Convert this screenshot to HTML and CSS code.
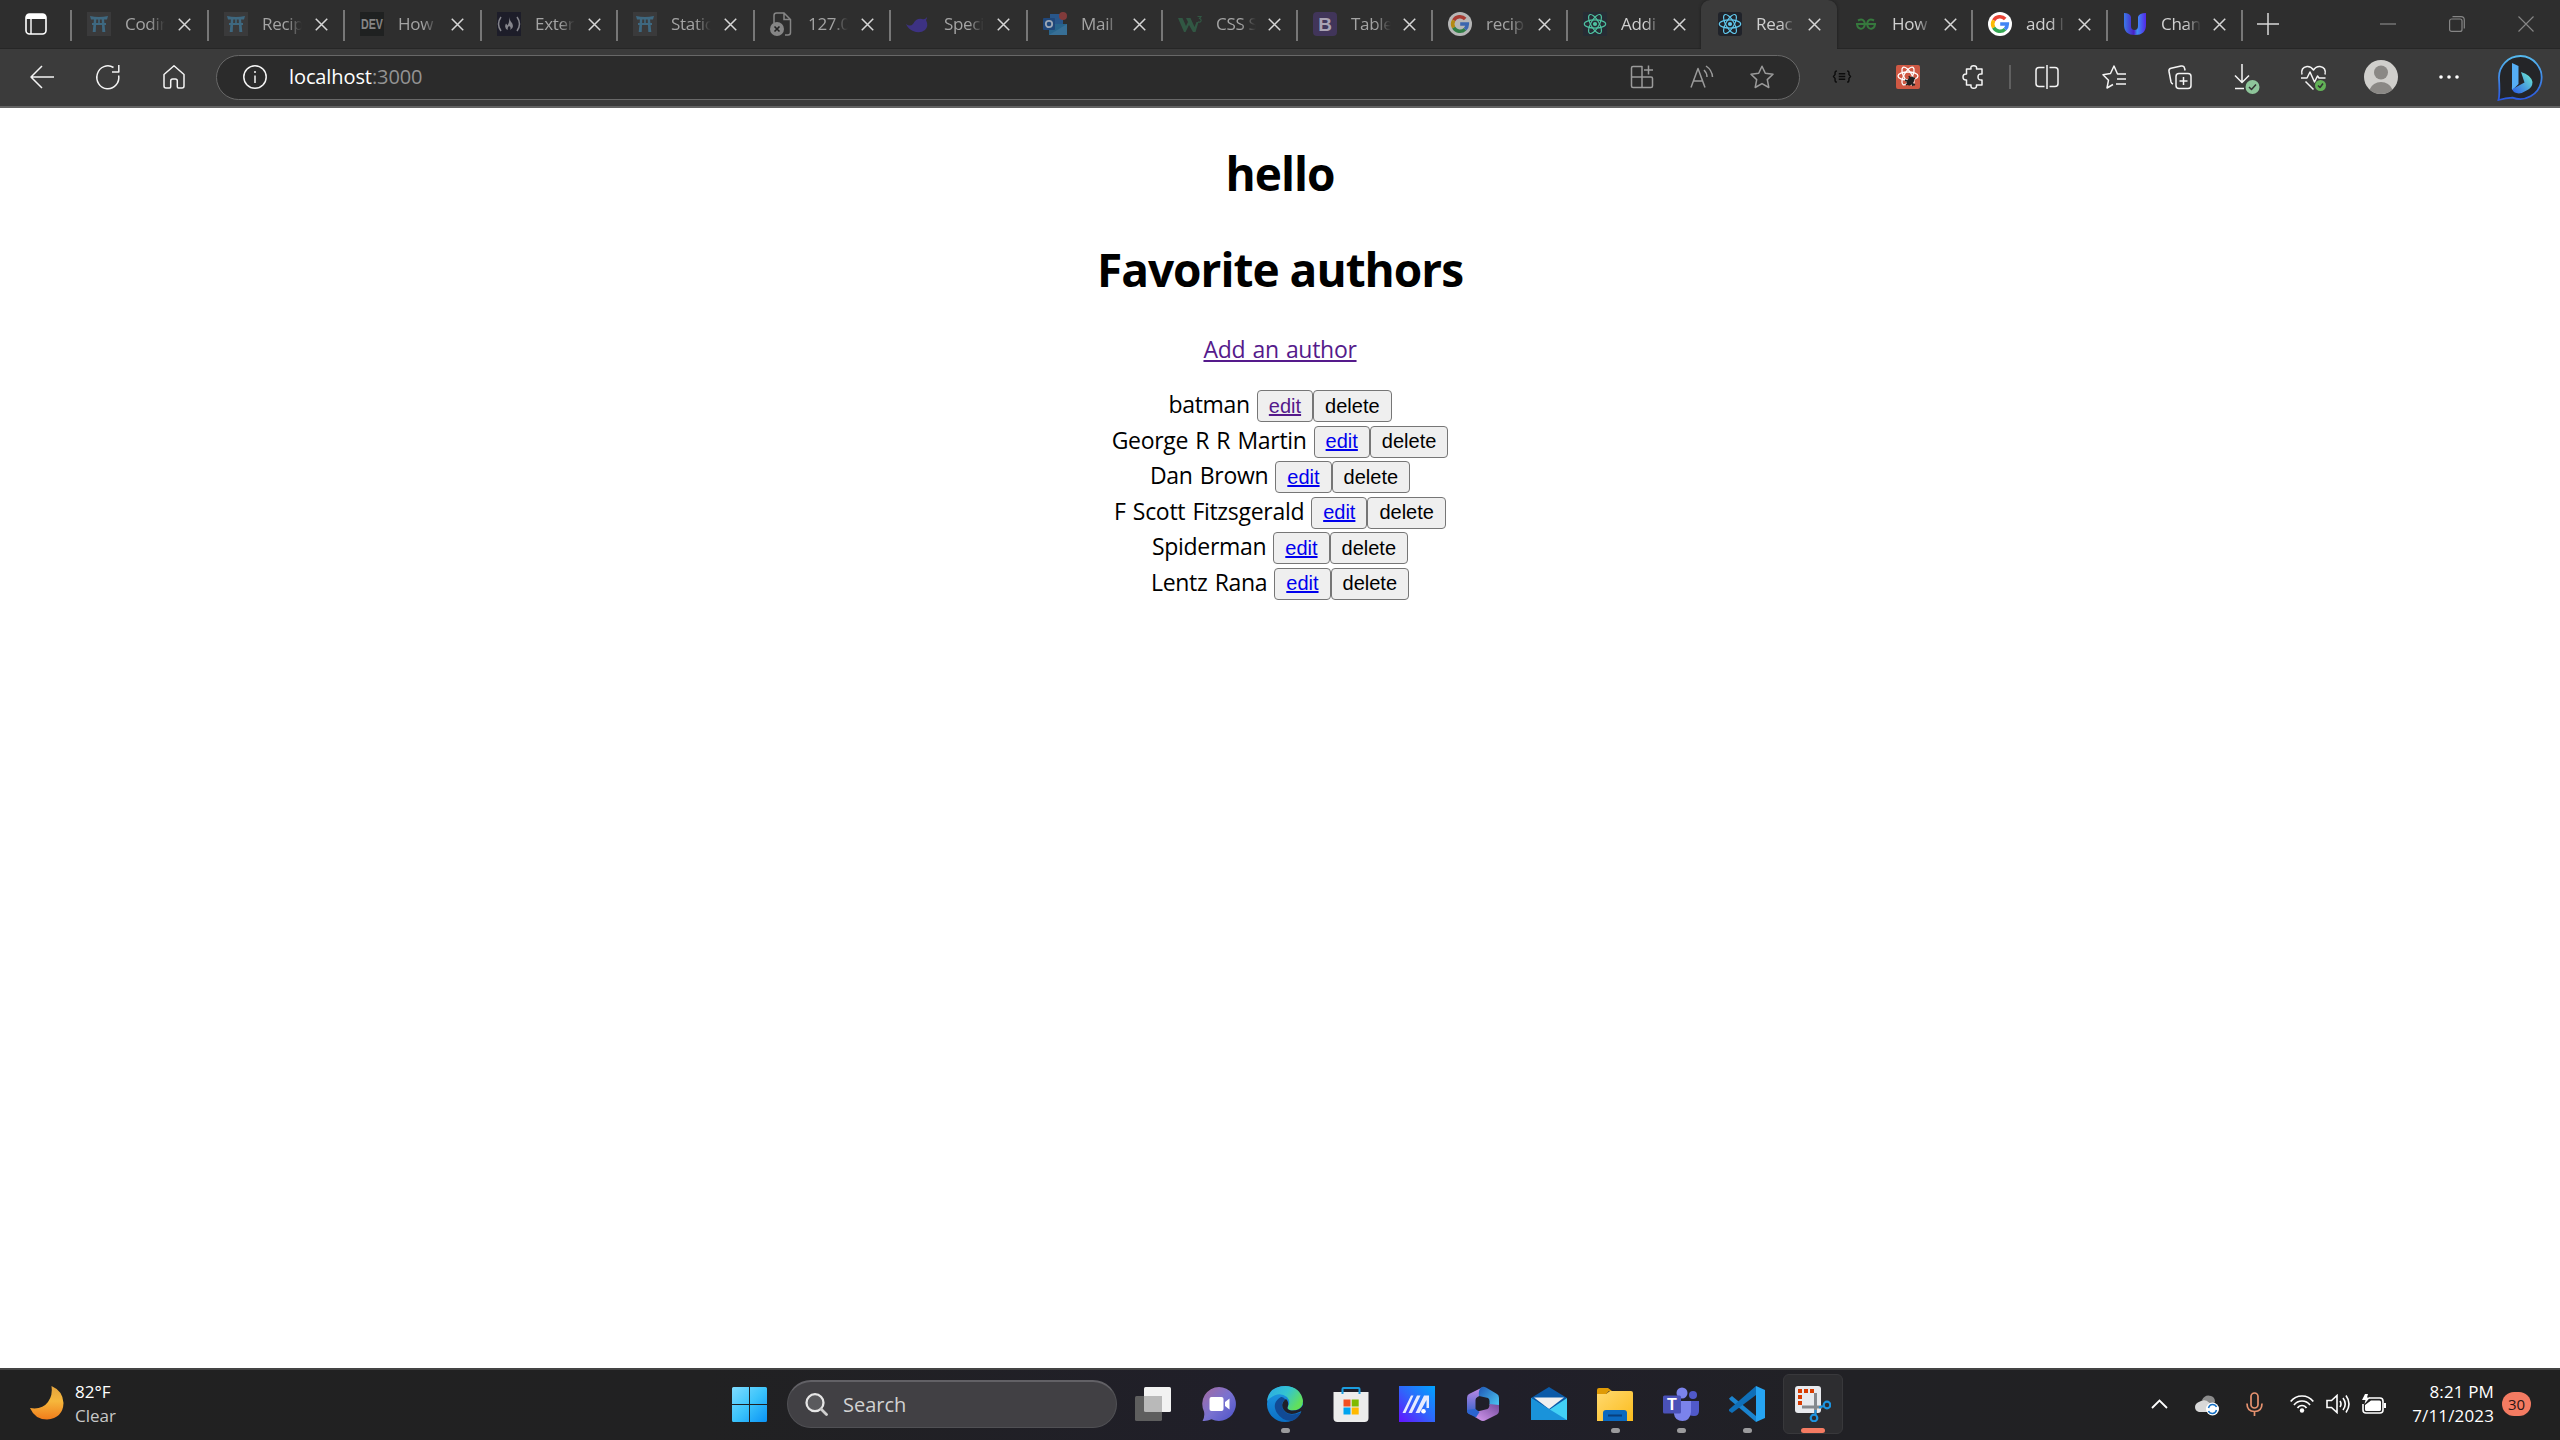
FILE: index.html
```html
<!DOCTYPE html>
<html lang="en">
<head>
<meta charset="utf-8">
<title>React App</title>
<link rel="stylesheet" href="styles.css">
</head>
<body>
<svg class="defs" width="0" height="0">
  <defs>
    <linearGradient id="gWin" x1="0" y1="0" x2="1" y2="1"><stop offset="0" stop-color="#7fdcff"/><stop offset=".5" stop-color="#3cc4fb"/><stop offset="1" stop-color="#0a93f5"/></linearGradient>
    <linearGradient id="gMoon" x1="0" y1="0" x2="0" y2="1"><stop offset="0" stop-color="#e3a33d"/><stop offset=".45" stop-color="#f6b73c"/><stop offset="1" stop-color="#f07c1b"/></linearGradient>
    <linearGradient id="gChat" x1="0" y1="0" x2="1" y2="1"><stop offset="0" stop-color="#a56a9e"/><stop offset=".5" stop-color="#7a72d0"/><stop offset="1" stop-color="#4b52c9"/></linearGradient>
    <linearGradient id="gEdge" x1="0" y1="0" x2="1" y2=".5"><stop offset="0" stop-color="#2aa7e8"/><stop offset=".55" stop-color="#34c4d0"/><stop offset="1" stop-color="#62e05a"/></linearGradient>
    <linearGradient id="gEdge2" x1="0" y1="0" x2="0" y2="1"><stop offset="0" stop-color="#1f9be6"/><stop offset="1" stop-color="#0b6fc4"/></linearGradient>
    <linearGradient id="gM" x1="1" y1="0" x2="0" y2="1"><stop offset="0" stop-color="#00a4ff"/><stop offset=".5" stop-color="#2f66fb"/><stop offset="1" stop-color="#6512ff"/></linearGradient>
    <linearGradient id="gFold" x1="0" y1="0" x2="1" y2="1"><stop offset="0" stop-color="#ffd970"/><stop offset="1" stop-color="#fbbc1c"/></linearGradient>
    <linearGradient id="g365a" x1="0" y1="0" x2="0" y2="1"><stop offset="0" stop-color="#c58be6"/><stop offset="1" stop-color="#2a5fc8"/></linearGradient>
    <linearGradient id="g365b" x1="0" y1="0" x2="1" y2="1"><stop offset="0" stop-color="#1f57b5"/><stop offset="1" stop-color="#51d4fb"/></linearGradient>
    <linearGradient id="g365c" x1="0" y1="1" x2="1" y2="0"><stop offset="0" stop-color="#d59af0"/><stop offset="1" stop-color="#744a9c"/></linearGradient>
    <linearGradient id="gBing" x1="0" y1="0" x2="0" y2="1"><stop offset="0" stop-color="#55b9ee"/><stop offset="1" stop-color="#2a56dd"/></linearGradient>
    <linearGradient id="gBing2" x1="0" y1="1" x2="1" y2="0"><stop offset="0" stop-color="#2a5ce6"/><stop offset="1" stop-color="#6ff0d0"/></linearGradient>
    <linearGradient id="gU" x1="0" y1="0" x2="1" y2="0"><stop offset="0" stop-color="#3b78e8"/><stop offset=".45" stop-color="#4a1fc4"/><stop offset=".6" stop-color="#3f8ff5"/><stop offset="1" stop-color="#5326e8"/></linearGradient>
    <symbol id="x" viewBox="0 0 12 12"><path d="M.7.7l10.6 10.6M11.3.7L.7 11.3" fill="none" stroke="currentColor" stroke-width="1.4"/></symbol>
    <symbol id="torii" viewBox="0 0 24 24"><rect width="24" height="24" fill="#3a3a3b"/><path d="M3 4q9 2 18 0l-1 3.500H4zM5 11h14v2H5zM7 7h2.300l-.6 13H5.700zM14.700 7H17l1.300 13h-3zM11.200 7h1.600v4h-1.600z" fill="#3e6880"/></symbol>
    <symbol id="react" viewBox="0 0 24 24"><g fill="none" stroke="currentColor" stroke-width="1.15"><ellipse cx="12" cy="12" rx="10.7" ry="4.1"/><ellipse cx="12" cy="12" rx="10.7" ry="4.1" transform="rotate(60 12 12)"/><ellipse cx="12" cy="12" rx="10.7" ry="4.1" transform="rotate(120 12 12)"/></g><circle cx="12" cy="12" r="2.1" fill="currentColor"/></symbol>
    <symbol id="google" viewBox="0 0 24 24"><circle cx="12" cy="12" r="12" fill="#fff"/><g fill="none" stroke-width="3.6"><path d="M5.7 8.3A7.3 7.3 0 0 1 17.2 6.9" stroke="#ea4335"/><path d="M5.7 15.7a7.3 7.3 0 0 1 0-7.4" stroke="#fbbc05"/><path d="M17 17.3A7.3 7.3 0 0 1 5.7 15.7" stroke="#34a853"/><path d="M12.2 12h7.1a7.3 7.3 0 0 1-2.3 5.3" stroke="#4285f4"/></g></symbol>
  </defs>
</svg>

<header class="browser">
  <div class="tabstrip">
    <div class="workspaces"><svg width="22" height="22" viewBox="0 0 22 22"><rect x="1" y="1" width="20" height="20" rx="3.500" fill="none" stroke="#fff" stroke-width="1.6"/><path d="M1 6V4q0-3 3-3h14q3 0 3 3v2z" fill="#fff"/><path d="M6 6v15" stroke="#fff" stroke-width="1.4"/></svg></div>
    <div class="tab w137"><svg class="fav"><use href="#torii"/></svg><span class="title">Codin</span><svg class="close"><use href="#x"/></svg></div>
    <div class="tab"><svg class="fav"><use href="#torii"/></svg><span class="title">Recip</span><svg class="close"><use href="#x"/></svg></div>
    <div class="tab w137"><svg class="fav" viewBox="0 0 24 24"><rect width="24" height="24" fill="#1f2121"/><text class="dev" x="12" y="17" textLength="22" lengthAdjust="spacingAndGlyphs">DEV</text></svg><span class="title">How</span><svg class="close"><use href="#x"/></svg></div>
    <div class="tab"><svg class="fav" viewBox="0 0 24 24"><rect width="24" height="24" fill="#1d1d29"/><path d="M4 5q-5 7 0 14M20 5q5 7 0 14" fill="none" stroke="#85858c" stroke-width="1.5"/><path d="M12 5q1 4 3.300 6.500q2 5-2.300 6.500q1.500-3-1-4q-2 2-1 4q-4.500-2-2-6.500q1 1 1.400 2q2.600-4 1.600-8.500z" fill="#85858c"/></svg><span class="title">Exter</span><svg class="close"><use href="#x"/></svg></div>
    <div class="tab w137"><svg class="fav"><use href="#torii"/></svg><span class="title">Static</span><svg class="close"><use href="#x"/></svg></div>
    <div class="tab"><svg class="fav" viewBox="0 0 24 24"><path d="M4 11V3.500q0-2.500 2.500-2.500H14l6.500 6.500v13q0 2.500-2.500 2.500h-3M14 1v6.500h6.500" fill="none" stroke="#858585" stroke-width="1.5"/><circle cx="7" cy="17" r="7" fill="#858585"/><path d="M4.500 14.500l5 5m0-5l-5 5" stroke="#222" stroke-width="1.6"/></svg><span class="title">127.0</span><svg class="close"><use href="#x"/></svg></div>
    <div class="tab w137"><svg class="fav" viewBox="0 0 24 24"><path d="M0 12q4 3 7 0q3-6 9-5q3 1 5-2q0 2-1 3q3 6-1 10q-5 4-12 1q-5-2-7-7z" fill="#3d3282"/></svg><span class="title">Speci</span><svg class="close"><use href="#x"/></svg></div>
    <div class="tab w135"><svg class="fav" viewBox="0 0 24 24"><path d="M7 2h13v12H7z" fill="#28568a"/><path d="M6 12h18v11H6z" fill="#28648c"/><path d="M6 23l18-11v11z" fill="#376f96"/><rect y="6" width="12" height="12" rx="1" fill="#20477a"/><circle cx="6" cy="12" r="3.200" fill="none" stroke="#9da7b5" stroke-width="1.8"/><circle cx="20" cy="4" r="4" fill="#813b3b"/></svg><span class="title">Mail</span><svg class="close"><use href="#x"/></svg></div>
    <div class="tab w135"><svg class="fav" viewBox="0 0 24 24"><path d="M0 6h4.500l3.500 8 2-4-2-4h4.500l4 9 2-5h2l-3 10h-2.500l-4-7-3.500 7H6z" fill="#315743"/><path d="M19.500 4.500h3.500l-1.500 2q2 .5 1.500 2.500q-1 2-3 .7" fill="none" stroke="#315743" stroke-width="1.200"/></svg><span class="title">CSS S</span><svg class="close"><use href="#x"/></svg></div>
    <div class="tab w135"><svg class="fav" viewBox="0 0 24 24"><rect width="24" height="24" rx="4" fill="#41355a"/><text class="boot" x="12" y="19">B</text></svg><span class="title">Table</span><svg class="close"><use href="#x"/></svg></div>
    <div class="tab w135"><svg class="fav dim"><use href="#google"/></svg><span class="title">recip</span><svg class="close"><use href="#x"/></svg></div>
    <div class="tab w135 lit"><svg class="fav mint"><use href="#react"/></svg><span class="title">Addi</span><svg class="close"><use href="#x"/></svg></div>
    <div class="tab active lit"><svg class="fav cyan"><use href="#react"/></svg><span class="title">Reac</span><svg class="close"><use href="#x"/></svg></div>
    <div class="tab w134 lit"><svg class="fav" viewBox="0 0 24 24"><path d="M2 12h20M4 8.500q6-3 7 3.500Q10 17.500 6 16.500Q2.500 15 3.500 12M20 8.500q-6-3-7 3.500q1 5.500 5 4.500q3.500-1.500 2.500-4.500" fill="none" stroke="#36793d" stroke-width="2"/></svg><span class="title">How</span><svg class="close"><use href="#x"/></svg></div>
    <div class="tab w135 lit"><svg class="fav"><use href="#google"/></svg><span class="title">add l</span><svg class="close"><use href="#x"/></svg></div>
    <div class="tab w135 lit"><svg class="fav" viewBox="0 0 24 24"><path d="M1 1q6 0 7 4v9q0 4 3.500 4q3.500 0 3.500-4V5q1-4 8-4v12q0 10-11 10Q1 23 1 13z" fill="url(#gU)"/></svg><span class="title">Chan</span><svg class="close"><use href="#x"/></svg></div>
    <div class="newtab"><svg width="22" height="22" viewBox="0 0 22 22"><path d="M11 0v22M0 11h22" stroke="#d8d8d8" stroke-width="1.500"/></svg></div>
    <div class="winctl">
      <svg viewBox="0 0 16 16"><path d="M0 8h16" stroke="#858585" stroke-width="1.200"/></svg>
      <svg viewBox="0 0 16 16"><rect x=".6" y="3" width="12.400" height="12.400" rx="2" fill="none" stroke="#858585" stroke-width="1.200"/><path d="M3.500.7h8.500q3.300 0 3.300 3.300v8.500" fill="none" stroke="#858585" stroke-width="1.200"/></svg>
      <svg viewBox="0 0 16 16"><path d="M.5.5l15 15M15.500.5l-15 15" stroke="#858585" stroke-width="1.200"/></svg>
    </div>
  </div>

  <div class="toolbar">
    <div class="slot"><svg class="ico" viewBox="0 0 24 24"><path d="M24 12H1M12 1L1 12l11 11"/></svg></div>
    <div class="slot"><svg class="ico" viewBox="0 0 24 24"><path d="M22.700 10.500A11 11.500 0 1 1 17.500 2.500M22.800 0v7H16"/></svg></div>
    <div class="slot"><svg class="ico" viewBox="0 0 24 24"><path d="M2 9.500L12 .8l10 8.700V21q0 2-2 2h-3.500q-1.200 0-1.200-1.200V16q0-2-2-2h-2.600q-2 0-2 2v5.800Q8.700 23 7.500 23H4q-2 0-2-2z"/></svg></div>
    <div class="address">
      <svg class="ico info" viewBox="0 0 24 24"><circle cx="12" cy="12" r="11.200"/><path d="M12 10.500V18M12 6v2"/></svg>
      <span class="url"><b>localhost</b>:3000</span>
      <div class="actions">
        <svg class="ico" viewBox="0 0 24 24"><path d="M3 1.500h9v21H3q-1.500 0-1.500-1.500V3q0-1.500 1.500-1.500zM1.500 12H21q1.500 0 1.500 1.500V21q0 1.500-1.500 1.500h-9M18.500.5v9M14 5h9"/></svg>
        <svg class="ico" viewBox="0 0 24 24"><path d="M1 22.500L8 3.500l7 19M3.500 16h9M14 5q3 3 3 7M16 1q6 4 6.500 11"/></svg>
        <svg class="ico" viewBox="0 0 24 24"><path d="M12 1.200l3.300 7.100 7.700 1-5.700 5.300 1.500 7.900L12 18.600l-6.800 3.900 1.500-7.900L1 9.300l7.700-1z"/></svg>
      </div>
    </div>
    <div class="tools">
      <div class="slot"><svg class="ico black" width="20" height="14" viewBox="0 0 20 14"><path d="M4.500 1Q2.500 1 2.500 3v2L.8 7l1.700 2v2q0 2 2 2M15.500 1q2 0 2 2v2l1.700 2-1.700 2v2q0 2-2 2M6.500 4h7M6.500 7h7M6.500 10h7"/></svg></div>
      <div class="slot"><svg class="bug" viewBox="0 0 24 24"><rect width="24" height="24" rx="2" fill="#cf5843"/><g fill="none" stroke="#fff" stroke-width="1.300"><ellipse cx="12" cy="11" rx="10" ry="4"/><ellipse cx="12" cy="11" rx="10" ry="4" transform="rotate(60 12 11)"/><ellipse cx="12" cy="11" rx="10" ry="4" transform="rotate(120 12 11)"/></g><ellipse cx="14.500" cy="16" rx="3.200" ry="5" transform="rotate(35 14.500 16)" fill="#222"/><path d="M9 15l10 5M10 20l9-7M13 11l4 10" stroke="#222" stroke-width="1.500"/></svg></div>
      <div class="slot"><svg class="ico" viewBox="0 0 24 24"><path d="M5 4h4q-.8-3.300 2.700-3.300T14.500 4H20v5q-4-.5-4 3t4 3v5h-5.500q.4 3.300-2.800 3.300T9 20H4.500v-5Q1 15.300 1 12t3.500-3V4z"/></svg></div>
      <div class="rule"></div>
      <div class="slot"><svg class="ico" viewBox="0 0 24 24"><path d="M9.500 2.500H4Q1 2.500 1 5.500v13q0 3 3 3h5.500M14.500 2.500H20q3 0 3 3v13q0 3-3 3h-5.500M12 0v24"/></svg></div>
      <div class="slot w67"><svg class="ico" viewBox="0 0 24 24"><path d="M22 9h-6.500L12 1 8.500 8.500 1 9.700l5.500 5.500L5 23l6-3.500M15 14h9M14 19h10M17 9h7"/></svg></div>
      <div class="slot"><svg class="ico" viewBox="0 0 24 24"><rect x="8" y="8.500" width="15" height="15" rx="3"/><path d="M15.500 12v8M11.500 16h8M5 19Q3.500 18.500 3 17L1 6.500Q.5 4 3 3.300L13 1q3-.5 3.500 2l.6 2.500"/></svg></div>
      <div class="slot w67"><svg class="ico wide" viewBox="0 0 25 30"><path d="M8 0v18M1 11.500l7 7 7-7M1 24.500h9"/><circle cx="18.500" cy="23" r="7" fill="#8ec59a" stroke="none"/><path d="M15 23l2.500 2.500 4.500-5" stroke="#333"/></svg></div>
      <div class="slot"><svg class="ico wide" viewBox="0 0 25 30"><path d="M1 10.500Q-.5 3.500 6 2.500q4-.3 6.500 3.500Q15 2.200 19 2.500q6.500 1 5 8M0 14h6l3-6 4.500 10 3-6 1.500 2h6.500M4.500 17.500l8 8"/><circle cx="19.500" cy="21.500" r="5.500" fill="#62b257" stroke="none"/><path d="M17 21.500l2 2 3-4" stroke="#333"/></svg></div>
      <div class="slot w69"><svg class="avatar" viewBox="0 0 34 34"><circle cx="17" cy="17" r="17" fill="#d0cfcc"/><circle cx="17" cy="12.500" r="7" fill="#8a8885"/><path d="M5.500 29.500Q9 22 17 22t11.500 7.500Q24 34 17 34T5.500 29.500z" fill="#8a8885"/></svg></div>
      <div class="slot w68"><svg width="20" height="4" viewBox="0 0 20 4"><g fill="#fff"><circle cx="2" cy="2" r="1.800"/><circle cx="10" cy="2" r="1.800"/><circle cx="18" cy="2" r="1.800"/></g></svg></div>
      <div class="slot w73"><svg class="bing" viewBox="0 0 46 46"><path d="M23.500 1a21.500 21.500 0 1 1-8 41.600Q9 43 1.500 45Q3 39 2 23.500A21.500 21.500 0 0 1 23.500 1z" fill="#242528" stroke="url(#gBing)" stroke-width="1.800"/><path d="M15 8l6.500 3v18l-6 6q-1-1-.5-4z" fill="#55aef5"/><path d="M24 17q10 3 11.500 10q0 6-6 8.500q-6 4-10 2.500-4-1-4-4l12-6.500z" fill="url(#gBing2)"/></svg></div>
    </div>
  </div>
</header>

<main class="page">
  <h1>hello</h1>
  <h1>Favorite authors</h1>
  <p><a class="visited" href="#">Add an author</a></p>
  <div class="authors">
    <div class="author"><span>batman</span><button><a class="visited" href="#">edit</a></button><button>delete</button></div>
    <div class="author"><span>George R R Martin</span><button><a href="#">edit</a></button><button>delete</button></div>
    <div class="author"><span>Dan Brown</span><button><a href="#">edit</a></button><button>delete</button></div>
    <div class="author"><span>F Scott Fitzsgerald</span><button><a href="#">edit</a></button><button>delete</button></div>
    <div class="author"><span>Spiderman</span><button><a href="#">edit</a></button><button>delete</button></div>
    <div class="author"><span>Lentz Rana</span><button><a href="#">edit</a></button><button>delete</button></div>
  </div>
</main>

<footer class="taskbar">
  <div class="weather">
    <svg width="34" height="34" viewBox="0 0 34 34"><path d="M21.500 0Q33 5 33.500 17Q33 32 17 33.500Q5 33.500 0 22Q12 24 18 16Q23 9 21.500 0z" fill="url(#gMoon)"/></svg>
    <div class="two"><span>82°F</span><span class="soft">Clear</span></div>
  </div>
  <div class="apps">
    <svg class="start" viewBox="0 0 35 35"><path d="M1.500 0H17v17H0V1.500Q0 0 1.500 0zM18 0h15.500Q35 0 35 1.500V17H18zM0 18h17v17H1.500Q0 35 0 33.500zM18 18h17v15.500q0 1.500-1.500 1.500H18z" fill="url(#gWin)"/></svg>
    <div class="search"><svg width="23" height="23" viewBox="0 0 23 23"><circle cx="10" cy="9.700" r="8.500" fill="#5a5a5d" stroke="#e6e6e6" stroke-width="2.300"/><path d="M16 16l5.500 5.500" stroke="#cfcfcf" stroke-width="2.800" stroke-linecap="round"/></svg><span>Search</span></div>
    <div class="app"><svg viewBox="0 0 36 36"><rect x="9" y="1" width="27" height="25" rx="1.500" fill="#f2f2f2"/><rect y="10" width="27" height="25" rx="1.500" fill="#5e5e5e"/><path d="M9 10h18v16H10.500Q9 26 9 24.500z" fill="#b9b9b9"/></svg></div>
    <div class="app"><svg viewBox="0 0 36 36"><path d="M18 1a17 17 0 1 1-7.500 32.300Q6 35.500 1.500 35Q4 31 3 25.500A17 17 0 0 1 18 1z" fill="url(#gChat)"/><rect x="8.500" y="11" width="14" height="14" rx="2" fill="#fff"/><path d="M24 16l4.500-3.500v11L24 20z" fill="#fff"/></svg></div>
    <div class="app run"><svg viewBox="0 0 36 36"><circle cx="18" cy="18" r="18" fill="url(#gEdge2)"/><path d="M0 15Q2 0 18.500 0Q34 1 36 15q0 9-10 9.500-7-.5-5-4 3-5-1-9.500Q11 4 0 15z" fill="url(#gEdge)"/><path d="M14 11Q4 17 10 27q6 9 16 7.500 6-3 7.500-8Q20 32 15.500 22q-2-6 3-8.500-2-3-4.500-2.500z" fill="#114a95"/><path d="M19 13q-5 3-3.500 8.500 3 8 13 6l5-2q1.500-1 0 1.500L36 24v-5q-3 6-12 5.500-5-1-3-4.500 1-4-2-7z" fill="#201f2a"/></svg></div>
    <div class="app"><svg viewBox="0 0 36 36"><path d="M.5 6h35v26q0 4-4 4h-27q-4 0-4-4z" fill="#ececec"/><path d="M9.500 8V3q0-1 1-1h15q1 0 1 1v5" fill="none" stroke="#1b9de0" stroke-width="2"/><path d="M10.500 13.500h7v7h-7z" fill="#f25022"/><path d="M18.700 13.500h7v7h-7z" fill="#7fba00"/><path d="M10.500 21.500h7v7h-7z" fill="#00a4ef"/><path d="M18.700 21.500h7v7h-7z" fill="#ffb900"/></svg></div>
    <div class="app"><svg viewBox="0 0 36 36"><rect width="36" height="36" fill="url(#gM)"/><path d="M3.500 27L12 9.500h2.500L6.500 27zM9.500 27L18 9.500h3.500L13 27zM16.500 27L25 9.500h5V22h-2.500v-8L20.500 27z" fill="#e6eaff"/><circle cx="24.500" cy="25.200" r="2.300" fill="#fff"/></svg></div>
    <div class="app"><svg viewBox="0 0 36 36"><path d="M18 1L4 8Q2 9 2 12v13q0 2 2 3l8 2q-1.500-2-1.500-4V14q0-2 2-3l7.500-4z" fill="url(#g365a)"/><path d="M17 1q2-.5 4 .5L32 8q2 1 2 4v12L24.500 19v-4q0-2-1.500-3L14 10q-1-7 3-9z" fill="url(#g365b)"/><path d="M34 19v6q0 2-2 3.500L21 34q-3 2-6 0l-5-3 .5-5 12-3q2-1 2-5z" fill="url(#g365c)"/><path d="M2 24l8.500-1 4 3-3.500 5.500L4 28q-2-1-2-4z" fill="#2b64d0"/></svg></div>
    <div class="app"><svg viewBox="0 0 36 36"><path d="M0 12L18 1l18 11-18 14z" fill="#0a5aa8"/><path d="M3 11.500h30L18 23z" fill="#efefef"/><path d="M0 12l18 12 18-12v22H0z" fill="#42d0f5"/><path d="M0 12l36 22H0z" fill="#1a93da"/></svg></div>
    <div class="app run"><svg viewBox="0 0 36 36"><path d="M0 4q0-2 2-2h9l4 3h-3L9 8H0z" fill="#df9a06"/><path d="M0 8h9l4-3h21q2 0 2 2v28H0z" fill="url(#gFold)"/><path d="M6 35v-8q0-3 3-3h18q3 0 3 3v8z" fill="#0b69c0"/><path d="M11 29.500h14" stroke="#093f7c" stroke-width="2"/></svg></div>
    <div class="app run"><svg viewBox="0 0 36 36"><circle cx="19" cy="7" r="5.500" fill="#7b83eb"/><circle cx="30" cy="9" r="4" fill="#5059c9"/><path d="M24 15h12v10q0 5-5 5t-7-3z" fill="#5059c9"/><path d="M11 15h17v11q-1 9-8.500 9T11 28z" fill="#7b83eb"/><rect y="9.500" width="18" height="18" rx="1.500" fill="#4a51b8"/><text class="teams" x="9" y="24">T</text></svg></div>
    <div class="app run"><svg viewBox="0 0 36 36"><path d="M0 12.500l3-2.500 24 20v6L1 14z" fill="#1b84cf"/><path d="M0 23.500L27 0v9L3 27 0 25z" fill="#0f6fb8"/><path d="M27 0l9 4v28l-9 4z" fill="#26a4f2"/></svg></div>
    <div class="app current"><svg viewBox="0 0 36 36"><rect y="0" width="26" height="27" rx="3" fill="#e8eaee"/><path d="M3 3h4v4H3zM9 3h4v4H9zM15 3h4v4h-4zM3 9h4v4H3zM3 15h4v4H3z" fill="#d83b01"/><path d="M20.500 7v20M7 21h20" stroke="#85898e" stroke-width="3"/><circle cx="32" cy="19" r="3.300" fill="none" stroke="#1c94e0" stroke-width="2.200"/><circle cx="19" cy="32" r="3.300" fill="none" stroke="#1c94e0" stroke-width="2.200"/><path d="M24 21.500l5-1.500M20.500 24v5" stroke="#1c94e0" stroke-width="2"/></svg></div>
  </div>
  <div class="tray">
    <svg class="chev" width="17" height="10" viewBox="0 0 17 10"><path d="M1 9l7.500-7.500L16 9" fill="none" stroke="#fff" stroke-width="1.800"/></svg>
    <svg class="cloud" width="24" height="24" viewBox="0 0 24 24"><path d="M7 8q3-6 9-4 4 1 4 6l-5 5z" fill="#8c8c8c"/><path d="M4 20q-4-1-4-5t5-5.500q5-3 9 1l5 5v4.500z" fill="#d8d8d8"/><circle cx="17.500" cy="17" r="6.500" fill="#fff"/><path d="M13.500 16q1-3.500 4-3.500t4 2.500M21.500 18q-1 3.500-4 3.500t-4-2.500" fill="none" stroke="#1570c4" stroke-width="1.500"/></svg>
    <svg class="mic" width="17" height="24" viewBox="0 0 17 24"><rect x="5" y="1" width="7" height="15" rx="3.500" fill="none" stroke="#e6926f" stroke-width="1.700"/><path d="M1 11.500q0 8 7.500 8t7.500-8M8.500 19.500V24" fill="none" stroke="#e6926f" stroke-width="1.700"/></svg>
    <svg class="wifi" width="24" height="18" viewBox="0 0 24 18"><path d="M.7 6.500Q5 1 12 1t11.300 5.500M4 10q3-4 8-4t8 4M7.500 13Q9 10.500 12 10.500t4.500 2.500" fill="none" stroke="#fff" stroke-width="1.700"/><circle cx="12" cy="15.500" r="2.200" fill="#fff"/></svg>
    <svg class="vol" width="24" height="20" viewBox="0 0 24 20"><path d="M1 6.500h4.500L11 1.500v17l-5.500-5H1zM14 7q2 3 0 6M17 4q4.500 6 0 12M20 1.500q6 8.500 0 17" fill="none" stroke="#fff" stroke-width="1.600"/></svg>
    <svg class="bat" width="24" height="20" viewBox="0 0 24 20"><path d="M7 4h11q3 0 3 3v9q0 3-3 3H4q-3 0-3-3v-6" fill="none" stroke="#fff" stroke-width="1.600"/><path d="M9 6.500h8.500q1.500 0 1.500 1.500v7.500q0 1.500-1.500 1.500h-13Q3 17 3 15.500V11zM22 9h2v5h-2zM3 0h3L5 3.500h3L2.500 10 3.500 6H0z" fill="#fff"/></svg>
    <div class="clock"><span>8:21 PM</span><span>7/11/2023</span></div>
    <span class="count">30</span>
  </div>
</footer>
</body>
</html>
```
FILE: styles.css
```css
* { box-sizing: border-box; }
html, body { height: 100%; }
body {
  margin: 0;
  display: flex;
  flex-direction: column;
  overflow: hidden;
  background: #fff;
  font-family: "Open Sans", "Noto Sans", sans-serif;
}
.defs { position: absolute; }
svg { display: block; flex: none; }

/* Tab strip */
.browser { height: 108px; flex: none; background: #3b3b3b; border-bottom: 2px solid #636363; }
.tabstrip { display: flex; height: 49px; background: #2e2e2e; border-bottom: 1px solid #262626; }
.workspaces { width: 70px; padding: 13px 0 0 25px; }
.tab {
  width: 136px;
  height: 49px;
  flex: none;
  display: flex;
  align-items: center;
  padding: 0 0 1px 17px;
  color: #a4a4a4;
  background: linear-gradient(#777, #777) 0 10px / 2px 31px no-repeat;
}
.w137 { width: 137px; }
.w135 { width: 135px; }
.w134 { width: 134px; }
.lit { color: #d0d0d0; }
.tab .fav { width: 24px; height: 24px; }
.dim { opacity: .65; }
.mint { color: #4fc3a1; background: #262b34; }
.cyan { color: #61c9ee; background: #20232a; border-radius: 3px; }
.title {
  width: 40px;
  margin-left: 14px;
  overflow: hidden;
  white-space: nowrap;
  font-size: 17px;
  line-height: 24px;
  letter-spacing: -.3px;
  padding-bottom: 1px;
  -webkit-mask-image: linear-gradient(90deg, #000 62%, transparent);
  mask-image: linear-gradient(90deg, #000 62%, transparent);
}
.tab .close { width: 13px; height: 13px; margin: 1px 0 0 13px; color: #d6d6d6; }
.tab.w135 .close, .tab.w134 .close, .tab.active .close { margin-left: 12px; }
.tab.active { background: #3b3b3b; border-radius: 9px 9px 0 0; box-shadow: 0 0 3px #1c1c1c; clip-path: inset(0 -4px 0 -4px); }
.tab.active + .tab { background: none; }
.dev { font: bold 14px "Liberation Sans", sans-serif; fill: #858585; text-anchor: middle; }
.boot { font: bold 19px "Liberation Sans", sans-serif; fill: #a9a2b3; text-anchor: middle; }
.newtab { width: 60px; padding: 13px 0 0 16px; background: linear-gradient(#777, #777) 0 10px / 2px 31px no-repeat; }
.winctl { display: flex; gap: 53px; margin-left: auto; padding: 16px 26px 0 0; }
.winctl svg { width: 16px; height: 16px; }

/* Toolbar */
.toolbar { display: flex; align-items: center; height: 55px; padding-left: 9px; }
.slot { width: 66px; flex: none; display: flex; justify-content: center; }
.slot.w67 { width: 67px; }
.slot.w68 { width: 68px; }
.slot.w69 { width: 69px; }
.slot.w73 { width: 73px; }
.ico { width: 24px; height: 24px; fill: none; stroke: #f4f4f4; stroke-width: 1.5; stroke-linejoin: round; overflow: visible; }
.ico.black { width: 20px; height: 13px; stroke: #0c0c0c; stroke-width: 1.5; }
.ico.wide { width: 25px; height: 30px; margin-top: 4px; }
.bug { width: 24px; height: 24px; }
.avatar { width: 34px; height: 34px; }
.bing { width: 46px; height: 46px; margin-top: 2px; }
.address {
  width: 1584px;
  height: 45px;
  margin: 2px 0 0 9px;
  padding: 0 25px 2px 26px;
  display: flex;
  align-items: center;
  background: #2b2b2b;
  border: 1.5px solid #686868;
  border-radius: 23px;
}
.url { margin-left: 22px; font-size: 20px; line-height: 28px; color: #939393; letter-spacing: -.1px; }
.url b { font-weight: 400; color: #fff; }
.actions { display: flex; gap: 36px; margin-left: auto; }
.actions .ico { stroke: #9b9b9b; }
.tools { display: flex; align-items: center; margin-left: 9px; }
.rule { width: 2px; height: 24px; margin: 0 3px 0 2px; background: #606060; }

/* Page */
.page { flex: 1; text-align: center; font-size: 23px; color: #000; letter-spacing: -.3px; word-spacing: 1.5px; }
h1 { margin: 33px 0 32px; font-size: 46px; line-height: 64px; letter-spacing: -1px; word-spacing: 0; }
h1 + h1 { margin-top: 0; }
p { margin: 0 0 22px; line-height: 32px; }
a { color: #0000ee; text-decoration: underline; }
a.visited { color: #551a8b; }
.author { display: flex; justify-content: center; align-items: center; height: 35.5px; padding-top: 3px; }
.author span { margin-right: 7px; padding-bottom: 4px; line-height: 30px; }
button {
  height: 32px;
  padding: 0 11px;
  border: 1.5px solid #767676;
  border-radius: 4px;
  background: #efefef;
  color: #000;
  font: 20px "Liberation Sans", Arial, sans-serif;
}

/* Taskbar */
.taskbar {
  height: 72px;
  flex: none;
  display: grid;
  grid-template-columns: 732px 1fr 440px;
  background: linear-gradient(90deg, #212121 0, #212122 700px, #201f29 1250px, #201f29 1500px, #212125 1850px, #212121 2300px);
  border-top: 2px solid #444;
  color: #fff;
}
.weather { display: flex; align-items: flex-start; gap: 11px; padding: 10px 0 0 30px; }
.weather svg { margin-top: 6px; }
.two, .clock { display: flex; flex-direction: column; font-size: 17px; line-height: 24px; }
.soft { color: #c8c8c8; }
.apps { display: flex; align-items: flex-start; }
.start { width: 35px; height: 35px; margin-top: 17px; }
.search {
  display: flex;
  align-items: center;
  gap: 15px;
  width: 330px;
  height: 48px;
  margin: 10px 3px 0 20px;
  padding: 0 17px;
  background: #414044;
  border: 1px solid #505054;
  border-top: 2px solid #626166;
  border-radius: 24px;
  font-size: 20px;
  color: #d2d2d2;
}
.app { width: 60px; height: 60px; margin: 4px 3px 0; padding: 12px 12px 0; border-radius: 6px; display: flex; flex-direction: column; align-items: center; gap: 6px; }
.app svg { width: 36px; height: 36px; }
.run::after { content: ""; width: 9px; height: 5px; border-radius: 3px; background: #9b9b9d; }
.current { padding-top: 11px; background: #2d2d30; border: 1px solid #38383b; }
.current::after { content: ""; width: 24px; height: 5px; border-radius: 3px; background: #f47b62; }
.teams { font: bold 16px "Liberation Sans", sans-serif; fill: #fff; text-anchor: middle; }
.tray { display: flex; align-items: center; height: 68px; padding-left: 31px; }
.cloud { margin-left: 27px; }
.mic { margin-left: 27px; }
.wifi { margin-left: 27px; }
.vol, .bat { margin-left: 12px; }
.clock { width: 108px; text-align: right; margin-top: -1px; letter-spacing: .15px; }
.count { width: 29px; height: 24px; margin-left: 8px; border-radius: 12px; background: #f47b62; color: #2a1512; font-size: 15px; line-height: 24px; text-align: center; }
```
